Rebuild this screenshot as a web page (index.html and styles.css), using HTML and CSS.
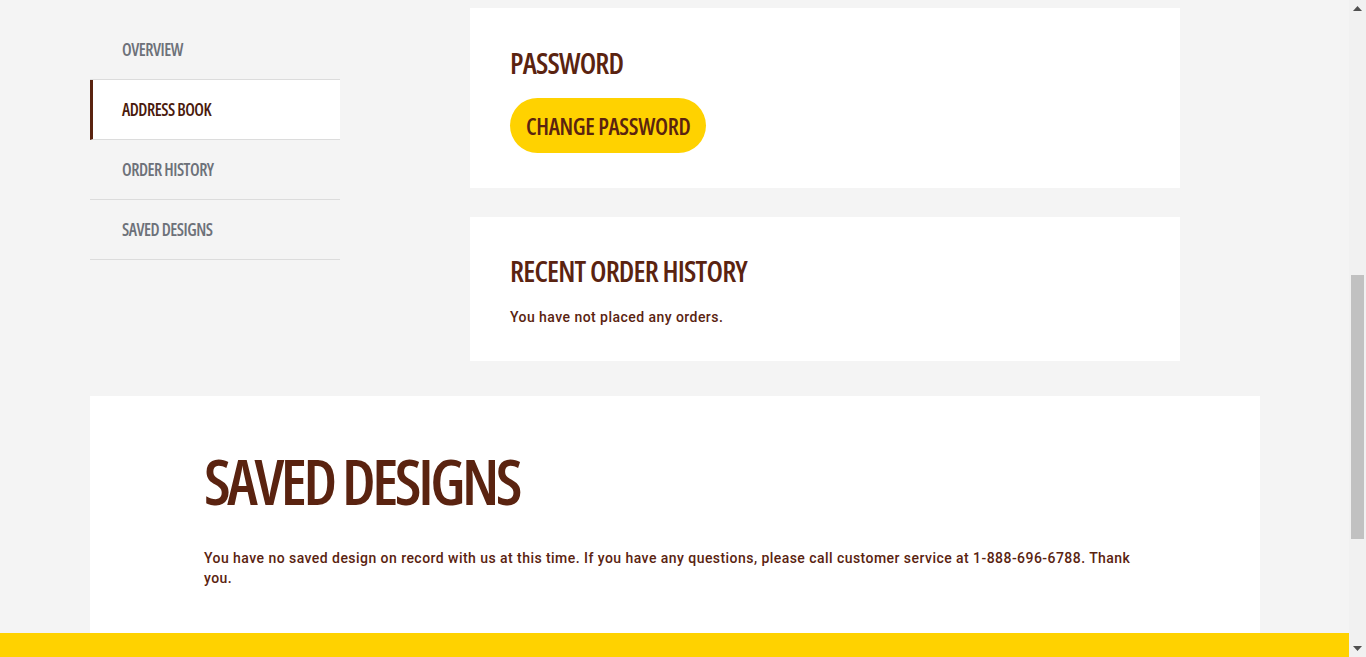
FILE: index.html
```html
<!DOCTYPE html>
<html lang="en">
<head>
<meta charset="utf-8">
<title>My Account</title>
<link rel="stylesheet" href="styles.css">
</head>
<body>
<div class="viewport">
  <main class="container account">
    <nav class="side-nav">
      <a class="nav-item" href="#">OVERVIEW</a>
      <a class="nav-item active" href="#">ADDRESS BOOK</a>
      <a class="nav-item" href="#">ORDER HISTORY</a>
      <a class="nav-item" href="#">SAVED DESIGNS</a>
    </nav>
    <div class="main-col">
      <section class="card card-password">
        <h2 class="card-title">PASSWORD</h2>
        <button class="btn" type="button">CHANGE PASSWORD</button>
      </section>
      <section class="card card-orders">
        <h2 class="card-title">RECENT ORDER HISTORY</h2>
        <p class="text">You have not placed any orders.</p>
      </section>
    </div>
  </main>
  <section class="container saved">
    <h2 class="saved-title">SAVED DESIGNS</h2>
    <p class="text">You have no saved design on record with us at this time. If you have any questions, please call customer service at 1-888-696-6788. Thank you.</p>
  </section>
  <footer class="site-footer"></footer>
</div>
<div class="scrollbar" aria-hidden="true">
  <div class="sb-btn">
    <svg width="9" height="5" viewBox="0 0 9 5"><path d="M4.5 0 L9 5 L0 5 Z" fill="#505050"/></svg>
  </div>
  <div class="sb-track"><div class="sb-thumb"></div></div>
  <div class="sb-btn">
    <svg width="9" height="5" viewBox="0 0 9 5"><path d="M0 0 L9 0 L4.5 5 Z" fill="#505050"/></svg>
  </div>
</div>
</body>
</html>
```
FILE: styles.css
```css
body {
  margin: 0;
  height: 657px;
  overflow: hidden;
  display: flex;
  background: #f4f4f4;
  color: #5a2310;
  font-family: Roboto, "Liberation Sans", sans-serif;
}
.viewport {
  flex: 1;
  min-width: 0;
  overflow: hidden;
}
.container { width: 1170px; margin-left: 90px; }

.account {
  display: flex;
  align-items: flex-start;
  gap: 130px;
  padding-top: 8px;
}
.side-nav {
  width: 250px;
  flex: none;
  margin-top: 12px;
  display: flex;
  flex-direction: column;
}
.nav-item {
  height: 60px;
  border-bottom: 1px solid #dcdcdc;
  display: flex;
  align-items: center;
  padding-left: 32px;
  padding-bottom: 1px;
  box-sizing: border-box;
  color: #6d7179;
  text-decoration: none;
  font-family: "Open Sans", sans-serif;
  font-weight: 600;
  font-size: 17px;
  letter-spacing: -0.5px;
  font-stretch: 75%;
}
.nav-item.active {
  background: #ffffff;
  color: #4a1a0c;
  border-left: 3px solid #5a2310;
  padding-left: 29px;
}

.main-col { width: 710px; display: flex; flex-direction: column; gap: 29px; }
.card { background: #ffffff; padding: 0 40px; box-sizing: border-box; }
.card-password { height: 180px; padding-top: 37px; }
.card-orders { height: 144px; padding-top: 36px; }
.card-title {
  margin: 0;
  font-family: "Open Sans", sans-serif;
  font-weight: 600;
  font-size: 29px;
  line-height: 36px;
  letter-spacing: -0.8px;
  font-stretch: 75%;
  color: #5a2310;
}
.card-password .card-title { margin-bottom: 17px; }
.card-orders .card-title { margin-bottom: 18px; }
.btn {
  display: block;
  height: 55px;
  padding: 0 16px;
  border: none;
  border-radius: 28px;
  background: #ffd200;
  color: #5a2310;
  font-family: "Open Sans", sans-serif;
  font-weight: 600;
  font-size: 23px;
  letter-spacing: -0.35px;
  font-stretch: 75%;
  cursor: pointer;
}
.text {
  margin: 0;
  font-size: 14px;
  line-height: 20px;
  font-weight: 500;
  letter-spacing: 0.45px;
  color: #5a2310;
}

.saved {
  margin-top: 35px;
  background: #ffffff;
  height: 237px;
  box-sizing: border-box;
  padding: 45px 114px 0;
}
.saved-title {
  margin: 0 0 27px;
  font-family: "Open Sans", sans-serif;
  font-weight: 600;
  font-size: 63px;
  line-height: 80px;
  letter-spacing: -3.4px;
  font-stretch: 75%;
}

.site-footer { height: 300px; background: #ffd200; }

.scrollbar {
  width: 17px;
  flex: none;
  height: 657px;
  display: flex;
  flex-direction: column;
  background: #f1f1f1;
}
.sb-btn {
  height: 17px;
  display: flex;
  align-items: center;
  justify-content: center;
}
.sb-track {
  flex: 1;
  padding: 258px 2px 0;
}
.sb-thumb {
  height: 264px;
  background: #c1c1c1;
}
```
